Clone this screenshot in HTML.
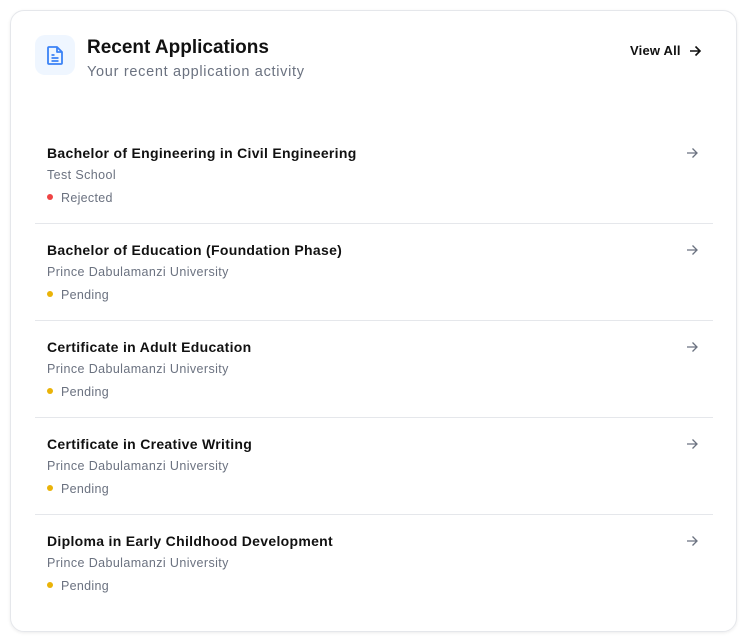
<!DOCTYPE html><html><head><style>
body{margin:0;background:#fff;font-family:"Liberation Sans",sans-serif;width:747px;height:642px;overflow:hidden}
.card{position:absolute;left:10px;top:10px;width:727px;height:622px;border:1px solid #e5e7eb;border-radius:14px;box-sizing:border-box;box-shadow:0 1px 3px rgba(0,0,0,.08)}
.ib{position:absolute;left:35px;top:35px;width:40px;height:40px;border-radius:10px;background:#eff6ff}
.t{position:absolute;left:87px;top:37px;font-size:19px;font-weight:bold;color:#111}
.s{position:absolute;left:87px;top:64px;font-size:14.5px;color:#6b7280;letter-spacing:0.7px}
.va{position:absolute;left:630px;top:43px;font-size:13px;font-weight:bold;color:#111;letter-spacing:0.2px}
.row{position:absolute;left:35px;width:678px;height:97px;box-sizing:border-box}
.row.b{border-bottom:1px solid #e5e7eb}
.rt{position:absolute;left:12px;top:18px;font-size:14px;font-weight:bold;color:#111;letter-spacing:0.3px}
.rs{position:absolute;left:12px;top:41px;font-size:12.5px;color:#6b7280;letter-spacing:0.4px}
.st{position:absolute;left:12px;top:64px;font-size:12.5px;color:#6b7280;letter-spacing:0.3px}
.dot{display:inline-block;width:6px;height:6px;border-radius:50%;margin-right:8px;vertical-align:2px}
.ar{position:absolute;left:650px;top:19px}
</style></head><body>
<div class="card"></div>
<div class="ib"><svg width="40" height="40" viewBox="0 0 40 40" fill="none" stroke="#3b82f6" stroke-width="1.8" stroke-linejoin="round"><path d="M14 12h8l5 5v11a1 1 0 0 1-1 1H14a1 1 0 0 1-1-1V13a1 1 0 0 1 1-1z"/><path d="M22 12v5h5M16.5 20h3M16.5 23h7M16.5 26h7"/></svg></div>
<div class="t">Recent Applications</div>
<div class="s">Your recent application activity</div>
<div class="va">View All</div>
<svg style="position:absolute;left:688px;top:44px" width="14" height="14" viewBox="0 0 14 14" fill="none" stroke="#111" stroke-width="1.6"><path d="M2 7h10M7.5 2.5L12 7l-4.5 4.5"/></svg>
<div class="row b" style="top:127px"><div class="rt">Bachelor of Engineering in Civil Engineering</div><div class="rs">Test School</div><div class="st"><span class="dot" style="background:#ef4444"></span>Rejected</div><svg class="ar" width="14" height="14" viewBox="0 0 14 14" fill="none" stroke="#6b7280" stroke-width="1.3"><path d="M2 7h10M7.5 2.5L12 7l-4.5 4.5"/></svg></div>
<div class="row b" style="top:224px"><div class="rt">Bachelor of Education (Foundation Phase)</div><div class="rs">Prince Dabulamanzi University</div><div class="st"><span class="dot" style="background:#eab308"></span>Pending</div><svg class="ar" width="14" height="14" viewBox="0 0 14 14" fill="none" stroke="#6b7280" stroke-width="1.3"><path d="M2 7h10M7.5 2.5L12 7l-4.5 4.5"/></svg></div>
<div class="row b" style="top:321px"><div class="rt">Certificate in Adult Education</div><div class="rs">Prince Dabulamanzi University</div><div class="st"><span class="dot" style="background:#eab308"></span>Pending</div><svg class="ar" width="14" height="14" viewBox="0 0 14 14" fill="none" stroke="#6b7280" stroke-width="1.3"><path d="M2 7h10M7.5 2.5L12 7l-4.5 4.5"/></svg></div>
<div class="row b" style="top:418px"><div class="rt">Certificate in Creative Writing</div><div class="rs">Prince Dabulamanzi University</div><div class="st"><span class="dot" style="background:#eab308"></span>Pending</div><svg class="ar" width="14" height="14" viewBox="0 0 14 14" fill="none" stroke="#6b7280" stroke-width="1.3"><path d="M2 7h10M7.5 2.5L12 7l-4.5 4.5"/></svg></div>
<div class="row" style="top:515px"><div class="rt">Diploma in Early Childhood Development</div><div class="rs">Prince Dabulamanzi University</div><div class="st"><span class="dot" style="background:#eab308"></span>Pending</div><svg class="ar" width="14" height="14" viewBox="0 0 14 14" fill="none" stroke="#6b7280" stroke-width="1.3"><path d="M2 7h10M7.5 2.5L12 7l-4.5 4.5"/></svg></div>
</body></html>
